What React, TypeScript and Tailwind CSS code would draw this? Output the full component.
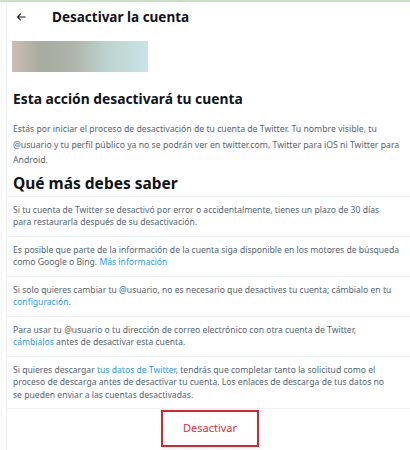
import React from 'react';

const font = { fontFamily: '"Noto Sans", "Liberation Sans", Arial, sans-serif' };

function Link({ children }: { children: React.ReactNode }) {
  return <span className="text-[#1d9bf0]">{children}</span>;
}

// ── One info row with a divider on top ───────────────────────────────────────
function InfoRow({ children }: { children: React.ReactNode }) {
  return (
    <div className="whitespace-nowrap border-t border-[#eff3f4] px-[6px] py-[7px] text-[8.6px] leading-[12.5px] text-[#536471]">
      {children}
    </div>
  );
}

export default function App() {
  return (
    <div style={font} className="h-[450px] w-[410px] overflow-hidden bg-white">
      <div className="h-[2px] bg-[#c9e2c4]" />
      <div className="ml-[1px] h-[448px] border-l border-[#f2f4f5]">
        <div className="ml-[4px] h-full border-l border-[#eceff1]">
          {/* header */}
          <div className="flex h-[30px] items-center">
            <svg viewBox="0 0 24 24" className="ml-[8px] h-[12px] w-[12px] fill-[#0f1419]">
              <path d="M7.414 13l5.043 5.04-1.414 1.42L3.586 12l7.457-7.46 1.414 1.42L7.414 11H21v2H7.414z" />
            </svg>
            <span className="ml-[25px] text-[13.5px] font-bold text-[#0f1419]">Desactivar la cuenta</span>
          </div>

          {/* blurred profile */}
          <div className="mt-[9px] ml-[5px] h-[31px] w-[136px] bg-[linear-gradient(90deg,#cdbdb6,#a8ab9f_22%,#aeb5ab_45%,#bdd3cf_70%,#c8e4e6)]" />

          <div className="px-[6px]">
            <h1 className="mt-[18px] text-[13.8px] font-bold leading-[18px] text-[#0f1419]">
              Esta acción desactivará tu cuenta
            </h1>
            <p className="mt-[14px] whitespace-nowrap text-[8.7px] leading-[15.5px] text-[#536471]">
              Estás por iniciar el proceso de desactivación de tu cuenta de Twitter. Tu nombre visible, tu
              <br />
              @usuario y tu perfil público ya no se podrán ver en twitter.com, Twitter para iOS ni Twitter para
              <br />
              Android.
            </p>
            <h2 className="mt-[4px] mb-[3px] text-[15.5px] font-bold leading-[20px] text-[#0f1419]">
              Qué más debes saber
            </h2>
          </div>

          <InfoRow>
            Si tu cuenta de Twitter se desactivó por error o accidentalmente, tienes un plazo de 30 días
            <br />
            para restaurarla después de su desactivación.
          </InfoRow>
          <InfoRow>
            Es posible que parte de la información de la cuenta siga disponible en los motores de búsqueda
            <br />
            como Google o Bing. <Link>Más información</Link>
          </InfoRow>
          <InfoRow>
            Si solo quieres cambiar tu @usuario, no es necesario que desactives tu cuenta; cámbialo en tu
            <br />
            <Link>configuración</Link>.
          </InfoRow>
          <InfoRow>
            Para usar tu @usuario o tu dirección de correo electrónico con otra cuenta de Twitter,
            <br />
            <Link>cámbialos</Link> antes de desactivar esta cuenta.
          </InfoRow>
          <InfoRow>
            Si quieres descargar <Link>tus datos de Twitter</Link>, tendrás que completar tanto la solicitud como el
            <br />
            proceso de descarga antes de desactivar tu cuenta. Los enlaces de descarga de tus datos no
            <br />
            se pueden enviar a las cuentas desactivadas.
          </InfoRow>

          <div className="border-t border-[#eff3f4] pt-[1px]">
            <div className="ml-[154px] flex h-[37px] w-[98px] items-center justify-center border-2 border-[#e0202b] text-[11px] text-[#e0303a]">
              Desactivar
            </div>
          </div>
        </div>
      </div>
    </div>
  );
}
